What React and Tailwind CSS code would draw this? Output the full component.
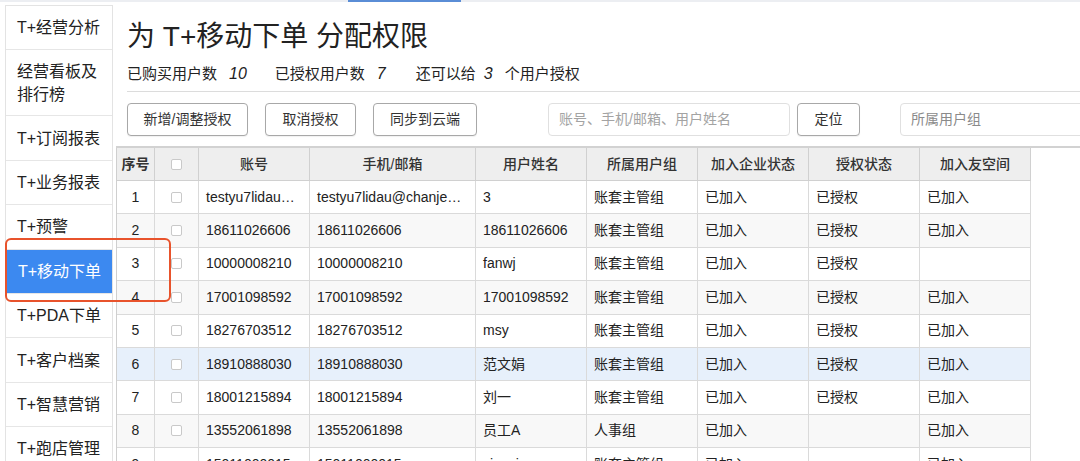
const menu = [
  { label: "T+经营分析" },
  { label: "经营看板及\n排行榜", tall: true },
  { label: "T+订阅报表" },
  { label: "T+业务报表" },
  { label: "T+预警" },
  { label: "T+移动下单", active: true },
  { label: "T+PDA下单" },
  { label: "T+客户档案" },
  { label: "T+智慧营销" },
  { label: "T+跑店管理" },
];

const headers = ["序号", "", "账号", "手机/邮箱", "用户姓名", "所属用户组", "加入企业状态", "授权状态", "加入友空间"];

const rows = [
  ["1", "testyu7lidau…", "testyu7lidau@chanje…", "3", "账套主管组", "已加入", "已授权", "已加入"],
  ["2", "18611026606", "18611026606", "18611026606", "账套主管组", "已加入", "已授权", "已加入"],
  ["3", "10000008210", "10000008210", "fanwj", "账套主管组", "已加入", "已授权", ""],
  ["4", "17001098592", "17001098592", "17001098592", "账套主管组", "已加入", "已授权", "已加入"],
  ["5", "18276703512", "18276703512", "msy", "账套主管组", "已加入", "已授权", "已加入"],
  ["6", "18910888030", "18910888030", "范文娟", "账套主管组", "已加入", "已授权", "已加入"],
  ["7", "18001215894", "18001215894", "刘一", "账套主管组", "已加入", "已授权", "已加入"],
  ["8", "13552061898", "13552061898", "员工A", "人事组", "已加入", "", "已加入"],
  ["9", "15011000015", "15011000015", "xiaoxin", "账套主管组", "已加入", "", "已加入"],
];

const cols = "grid grid-cols-[38px_44px_111px_166px_111px_111px_111px_111px_111px]";

function Check() {
  return <span className="block h-[11px] w-[11px] rounded-[2px] border border-[#c9c9c9] bg-white" />;
}

function Btn({ children, w }) {
  return (
    <button className={`h-[33px] shrink-0 ${w} rounded-[4px] border border-[#a8a8a8] bg-white text-[14px] text-[#333] shadow-[0_1px_1px_rgba(0,0,0,0.06)]`}>
      {children}
    </button>
  );
}

export default function App() {
  return (
    <div
      className="relative h-[461px] w-[1080px] overflow-hidden bg-white text-[#222]"
      style={{ fontFamily: '"Liberation Sans", "Noto Sans CJK SC", sans-serif' }}
    >
      {/* 顶部细线 */}
      <div className="h-[2px] bg-[#eceef2]">
        <div className="ml-[348px] h-full w-[113px] bg-[#5a8dd6]" />
      </div>

      <div className="mt-[3px] flex">
        {/* 左侧菜单 */}
        <div className="ml-[5px] w-[108px] shrink-0 border-x border-t border-[#e3e3e3]">
          {menu.map((m) => (
            <div
              key={m.label}
              className={`flex items-center border-b border-[#e6e6e6] pl-[11px] text-[16px] leading-[23px] whitespace-pre-line ${
                m.tall ? "h-[66px]" : "h-[44.4px]"
              } ${m.active ? "ml-px bg-[#3c89f0] pl-[10px] text-white" : ""}`}
            >
              {m.label}
            </div>
          ))}
        </div>

        {/* 主区域 */}
        <div className="min-w-0 flex-1">
          <div className="pl-[14px]">
            <h1 className="mt-[14px] text-[28px] leading-[36px] font-normal">为 T+移动下单 分配权限</h1>
            <div className="mt-[8px] flex items-center text-[15px] leading-[22px]">
              <span>已购买用户数</span>
              <i className="ml-[12px] text-[16px]">10</i>
              <span className="ml-[28px]">已授权用户数</span>
              <i className="ml-[12px] text-[16px]">7</i>
              <span className="ml-[30px]">还可以给</span>
              <i className="ml-[8px] text-[16px]">3</i>
              <span className="ml-[12px]">个用户授权</span>
            </div>
            <div className="mt-[6px] border-t border-[#dcdcdc]" />

            <div className="mt-[11px] flex items-center">
              <Btn w="w-[121px]">新增/调整授权</Btn>
              <div className="ml-[17px] shrink-0"><Btn w="w-[91px]">取消授权</Btn></div>
              <div className="ml-[17px] shrink-0"><Btn w="w-[104px]">同步到云端</Btn></div>
              <div className="ml-[71px] flex h-[33px] w-[242px] shrink-0 items-center rounded-[4px] border border-[#e0e0e0] pl-[10px] text-[14px] text-[#a3a3a3]">
                账号、手机/邮箱、用户姓名
              </div>
              <div className="ml-[7px] shrink-0"><Btn w="w-[63px]">定位</Btn></div>
              <div className="ml-[40px] flex h-[33px] w-[200px] shrink-0 items-center rounded-[4px] border border-[#e0e0e0] pl-[10px] text-[14px] text-[#8a8a8a]">
                所属用户组
              </div>
            </div>
          </div>

          {/* 表格 */}
          <div className="mt-[10px] ml-[3px] border-t-[2px] border-[#d2d2d2]">
            <div className="w-[915px] border-l border-[#cfcfcf]">
              <div className={`${cols} h-[33px] bg-[#eeeeee] text-[14px] text-[#333]`}>
                {headers.map((h, i) => (
                  <div
                    key={i}
                    className={`flex items-center justify-center border-r border-b border-[#d0d0d0] ${i === 0 ? "font-bold" : "font-medium"}`}
                  >
                    {i === 1 ? <Check /> : h}
                  </div>
                ))}
              </div>
              {rows.map((r, ri) => (
                <div
                  key={ri}
                  className={`${cols} h-[33.4px] text-[14px] text-[#222] ${
                    ri === 5 ? "bg-[#e7f0fb]" : ri % 2 === 1 ? "bg-[#f8f8f8]" : "bg-white"
                  }`}
                >
                  <div className="flex items-center justify-center border-r border-b border-[#dadada]">{r[0]}</div>
                  <div className="flex items-center justify-center border-r border-b border-[#dadada]">
                    {ri < 8 && <Check />}
                  </div>
                  {r.slice(1).map((c, ci) => (
                    <div key={ci} className="flex items-center overflow-hidden whitespace-nowrap border-r border-b border-[#dadada] pl-[7px]">
                      {c}
                    </div>
                  ))}
                </div>
              ))}
            </div>
          </div>
        </div>
      </div>

      {/* 红色标注框 */}
      <div className="absolute left-[5px] top-[238px] h-[64px] w-[166px] rounded-[6px] border-[2.5px] border-[#e8532c]" />
    </div>
  );
}
